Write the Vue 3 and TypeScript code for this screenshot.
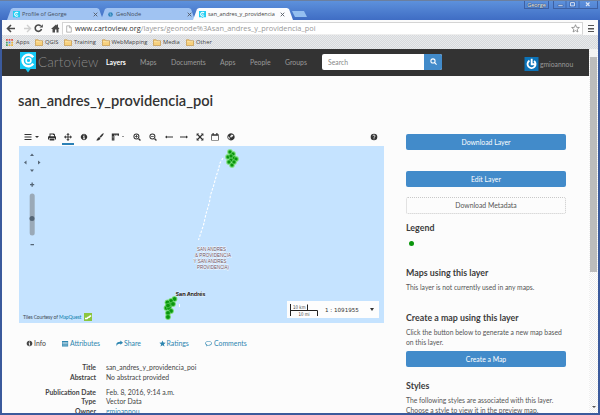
<script setup lang="ts">
interface Tab { title: string; cls: string }
interface Tool { name: string; d: string; stroke?: boolean; w: number }

const tabs: Tab[] = [
  { title: 'Profile of George', cls: 't1' },
  { title: 'GeoNode', cls: 't2' },
  { title: 'san_andres_y_providencia', cls: 't3 active' },
]
const bookmarks = [
  { name: 'QGIS', w: 29 },
  { name: 'Training', w: 37.5 },
  { name: 'WebMapping', w: 51.5 },
  { name: 'Media', w: 33 },
  { name: 'Other', w: 40 },
]
const nav = [
  { name: 'Layers', w: 34 },
  { name: 'Maps', w: 31 },
  { name: 'Documents', w: 49 },
  { name: 'Apps', w: 30 },
  { name: 'People', w: 35 },
  { name: 'Groups', w: 37 },
]
const tools: Tool[] = [
  { name: 'menu', w: 24, stroke: true, d: 'M.5 1.5h7M.5 4h7M.5 6.5h7' },
  { name: 'print', w: 16, d: 'M1.5 0.5h4.5l1 1V3H1.5zM2.5 1.4V3.2h3.5V2H5V1.4zM0 3.8L1 3h6l1 .8V6.5H6.8V5H1.2v1.5H0zM1.7 5.6h4.6V7.6H1.7z' },
  { name: 'pan', w: 15.5, d: 'M4 0L5.7 1.8H4.5v1.7h1.7V2.3L8 4 6.2 5.7V4.5H4.5v1.7h1.2L4 8 2.3 6.2h1.2V4.5H1.8v1.2L0 4l1.8-1.7v1.2h1.7V1.8H2.3z' },
  { name: 'info', w: 16, d: 'M4 .8a3.2 3.2 0 1 0 .01 0zM3.5 1.6h1v.9h-1zM3 3.2h1.5v2.4H5v.7H3v-.7h.5V3.9H3z' },
  { name: 'brush', w: 15.5, d: 'M7.6.3C8.2.8 6.5 3.2 4.8 4.8L3.5 3.7C5 1.8 7 0 7.6.3zM3.2 4.1l1.2 1.1C4 7 2.5 7.8.2 7.2 1.5 6.6 1 5 3.2 4.1z' },
  { name: 'measure', w: 22, d: 'M.8.5H8v2.3H7V1.800h-.5v1h-.7v-1h-.7v1h-.7v-1h-1V7.500H.8zM1.600 3v.5h1V3zM1.600 4.300v.5h1v-.5zM1.600 5.700v.5h1v-.5z' },
  { name: 'zoom-in', w: 15.5, d: 'M3.4.4a3 3 0 1 1 0 6 3 3 0 0 1 0-6zM3.4 1.4a2 2 0 1 0 0 4 2 2 0 0 0 0-4zM3 2h.8v1h1v.8h-1v1H3v-1H2V3h1zM5.9 5l2 2-.9.9-2-2z' },
  { name: 'zoom-out', w: 16, d: 'M3.4.4a3 3 0 1 1 0 6 3 3 0 0 1 0-6zM3.4 1.4a2 2 0 1 0 0 4 2 2 0 0 0 0-4zM2 3h2.8v.8H2zM5.9 5l2 2-.9.9-2-2z' },
  { name: 'previous', w: 15.5, d: 'M0 4l2-1.6v1.2h6v.8H2v1.2z' },
  { name: 'next', w: 15.5, d: 'M8 4L6 2.4v1.2H0v.8h6v1.2z' },
  { name: 'extent', w: 15.5, d: 'M.6.6h2.5l-.8.8L4 3.1l1.7-1.7-.8-.8h2.5v2.5l-.8-.8L4.9 4l1.7 1.7.8-.8v2.5H4.9l.8-.8L4 4.9 2.3 6.6l.8.8H.6V4.9l.8.8L3.1 4 1.4 2.3l-.8.8z' },
  { name: 'calendar', w: 15.5, d: 'M.3 1.2H1.5V0h1.2v1.2h2.6V0h1.2v1.2h1.2v6.4H.3zM1 2.7v4.2h6V2.7z' },
  { name: 'globe', w: 12, d: 'M4 .3a3.600 3.600 0 1 0 .01 0zM4.600 1.200l1.800 1.200-.7 1.100-1.100.2-.3 1L3.200 4l.2-1.200L4.600 2zM1.200 3.200l1.400 1.200-.1 1.200 1 1C1.800 6.500.9 5 1.200 3.200z' },
]
const northPoints = [[230, 152], [233, 154], [228, 157], [234, 158], [231, 160], [236, 159], [229, 162], [232, 165], [234, 162], [231, 156]]
const southPoints = [[174.5, 299], [171, 301], [167.5, 302.5], [170, 305], [173, 304], [166.5, 308], [169, 308], [171, 311], [168, 313], [168, 317], [168, 305.5]]
const route = 'M223 158L220 163 218.5 169 216 177 213.5 186 210.5 195 209.5 202 206 214 203.5 225 200.5 234 198.5 240'
const infoTabs = [
  { name: 'Info', w: 36, d: 'M4 .8a3.2 3.2 0 1 0 .01 0zM3.5 1.6h1v.9h-1zM3 3.2h1.5v2.4H5v.7H3v-.7h.5V3.9H3z' },
  { name: 'Attributes', w: 54, d: 'M0 1h7v6.5H0zM.5 2.5v.5h6v-.5zM.5 4v.5h6V4zM.5 5.5v.5h6v-.5z' },
  { name: 'Share', w: 42.5, d: 'M5 .7L8 3.2 5 5.5V4.2C2.5 4 1.3 4.6 1 7-.5 4 1 2 5 2z' },
  { name: 'Ratings', w: 46.5, d: 'M4 .5l1 2.4 2.6.2-2 1.7.7 2.6L4 6 1.7 7.4l.7-2.6-2-1.7L3 2.9z' },
  { name: 'Comments', w: 50, d: 'M4 1C1.8 1 .3 2.2.3 3.7c0 1 .6 1.7 1.4 2.2L1.3 7.3 3.2 6.3C6 6.6 7.8 5.3 7.8 3.7 7.8 2.2 6.2 1 4 1zM4 1.7c2 0 3.1 1 3.1 2S5.8 5.8 3.2 5.6l-.8.4.2-.5C1.5 5 1 4.4 1 3.7c0-1 1.2-2 3-2z' },
]
const details = [
  { k: 'Title', v: 'san_andres_y_providencia_poi' },
  { k: 'Abstract', v: 'No abstract provided' },
  { k: 'Publication Date', v: 'Feb. 8, 2016, 9:14 a.m.', gap: true },
  { k: 'Type', v: 'Vector Data' },
  { k: 'Owner', v: 'gmioannou', link: true },
]
</script>

<template>
  <div class="window">
    <header class="titlebar">
      <div class="tabs">
        <div v-for="t in tabs" :key="t.title" class="tab" :class="t.cls">
          <svg v-if="t.title !== 'GeoNode'" class="fav" viewBox="0 0 8 8"><path fill="#22cdf2" d="M0 0h8v7H5L4 8 3 7H0z" /><path fill="none" stroke="#fff" stroke-width="1.2" d="M5.8 2.3a2.2 2.2 0 1 0 0 2.8M3.5 3.7h1.5" /></svg>
          <svg v-else class="fav" viewBox="0 0 8 8"><circle cx="4" cy="4" r="2.6" fill="#2a7fb8" /><path stroke="#73b7dd" stroke-width=".7" d="M2 3l4 2M4 1.5v5" /></svg>
          <span class="tab-title">{{ t.title }}</span>
          <svg class="close" viewBox="0 0 5 5"><path stroke="#555b66" stroke-width=".9" d="M.7.7l3.6 3.6M4.3.7L.7 4.3" /></svg>
        </div>
        <i class="newtab"></i>
      </div>
      <div class="controls">
        <span class="user">George</span>
        <span class="ctl"><svg viewBox="0 0 38 7"><path fill="#e6eefb" stroke="#284a88" stroke-width=".5" d="M1 3.8h5v1.5H1z" /><path fill="none" stroke="#dbe6f8" d="M13.5 1.5h4v3.5h-4z" /><path fill="none" stroke="#274783" stroke-width=".4" d="M12.7.8h5.6v5h-5.6z" /><path stroke="#3e60a2" stroke-width=".8" d="M9 0v7M22 0v7" /><path stroke="#dbe6f8" stroke-width="1.2" d="M29 1.5l3.5 3.5M32.5 1.5L29 5" /></svg></span>
      </div>
    </header>

    <div class="body">
      <div class="addressbar">
        <svg class="navicons" viewBox="0 0 58 15">
          <g fill="none" stroke="#4a4a4a" stroke-width="1.6">
            <path d="M13 8.5H6M9 5L5.5 8.5 9 12" />
            <path d="M38.7 5.9A3.2 3.2 0 1 0 39.5 9" />
          </g>
          <path fill="#4a4a4a" d="M37.500 7.500h3.300V4.300zM49 9l5-4.600 1 1V4.500h1V7l1.500 2H56.500v3.500H54.500V9.500h-1.500v3H50.500V9z" />
          <path fill="none" stroke="#cfcfcf" stroke-width="1.4" d="M22 8.500h6M25 5L28.500 8.500 25 12" />
        </svg>
        <div class="omnibox">
          <svg class="page" viewBox="0 0 7 9"><path fill="#fff" stroke="#999" stroke-width=".8" d="M.8.8h3.4l2 2v5.4H.8zM4 .8V3h2.2" /></svg>
          <span class="url"><b>www.cartoview.org</b>/layers/geonode%3Asan_andres_y_providencia_poi</span>
          <svg class="star" viewBox="0 0 10 10"><path fill="#fff" stroke="#777" stroke-width=".8" d="M5 .8l1.2 2.9 3.1.2-2.4 2 .8 3L5 7.3 2.3 8.9l.8-3-2.4-2 3.1-.2z" /></svg>
        </div>
        <i class="burger"></i>
      </div>
      <div class="bookmarks">
        <svg class="apps" viewBox="0 0 8 8"><path fill="#dd5246" d="M0 0h2v2H0zM3 0h2v2H3zM6 0h2v2H6z" /><path fill="#45a168" d="M0 3h2v2H0z" /><path fill="#4c86e8" d="M3 3h2v2H3z" /><path fill="#e8b23e" d="M6 3h2v2H6zM3 6h2v2H3zM6 6h2v2H6z" /><path fill="#45a168" d="M0 6h2v2H0z" /></svg>
        <span class="apps-label">Apps</span>
        <span v-for="b in bookmarks" :key="b.name" class="bm" :style="{ width: b.w + 'px' }">
          <svg viewBox="0 0 8 7"><path fill="#f7d07b" stroke="#b98632" stroke-width=".6" d="M.4 6.6V.8h2.8l.8 1h3.6v4.8z" /><path stroke="#fff0c2" stroke-width=".6" d="M1 2.7h6" /></svg>{{ b.name }}
        </span>
      </div>

      <div class="viewport">
        <div class="page-area">
          <nav class="navbar">
            <svg class="logo" viewBox="0 0 16 21"><path fill="#14c8f4" d="M0 0h16v17h-5.5L8 20.5 5.5 17H0z" /><path fill="none" stroke="#fff" stroke-width="2.5" d="M13.2 5.3A5.8 5.8 0 1 0 13.2 11.6" /><circle cx="8.5" cy="8.4" r="2.4" fill="none" stroke="#fff" stroke-width="1.6" /></svg>
            <span class="brand">Cartoview</span>
            <a v-for="n in nav" :key="n.name" :class="{ on: n.name === 'Layers' }" :style="{ width: n.w + 'px' }">{{ n.name }}</a>
            <div class="search"><span>Search</span><b><svg viewBox="0 0 8 8"><path fill="none" stroke="#fff" stroke-width="1.2" d="M5.3 5.3L7.5 7.5" /><circle cx="3.4" cy="3.4" r="2.4" fill="none" stroke="#fff" stroke-width="1.2" /></svg></b></div>
            <div class="account">
              <svg viewBox="0 0 15 15"><path fill="#0c73b8" d="M0 0h15v15H0z" /><path fill="none" stroke="#fff" stroke-width="2" d="M5.3 3.9A4.3 4.3 0 1 0 10.2 4.2M7.7 2v5.8h3.8" /></svg>
              <span>gmioannou</span>
            </div>
          </nav>

          <h1>san_andres_y_providencia_poi</h1>

          <div class="columns">
            <main>
              <div class="toolbar">
                <span v-for="t in tools" :key="t.name" class="tool" :class="t.name" :style="{ width: t.w + 'px' }">
                  <svg viewBox="0 0 8 8"><path :d="t.d" :fill="t.stroke ? 'none' : '#333'" :stroke="t.stroke ? '#333' : 'none'" fill-rule="evenodd" /></svg>
                  <i v-if="t.name === 'menu' || t.name === 'measure'" class="caret"></i>
                </span>
                <svg class="help" viewBox="0 0 8 8"><circle cx="4" cy="4" r="3.3" fill="#333" /><path fill="none" stroke="#fff" stroke-width=".9" d="M2.8 3.1C3 1.7 5.3 1.9 5 3.2 4.8 3.8 4 3.9 4 4.8M4 5.4v.9" /></svg>
              </div>
              <div class="map">
                <svg class="canvas" viewBox="19 146 365 177">
                  <path :d="route" fill="none" stroke="#fff" stroke-width="1.1" stroke-dasharray="2.5 1.5" />
                  <g fill="#8be08d"><circle v-for="(p, i) in northPoints" :key="i" :cx="p[0]" :cy="p[1]" r="2.9" /><circle v-for="(p, i) in southPoints" :key="'s' + i" :cx="p[0]" :cy="p[1]" r="2.9" /></g>
                  <g fill="#0a960c" stroke="#7adf7c" stroke-width=".5"><circle v-for="(p, i) in northPoints" :key="i" :cx="p[0]" :cy="p[1]" r="2" /><circle v-for="(p, i) in southPoints" :key="'s' + i" :cx="p[0]" :cy="p[1]" r="2.3" /></g>
                  <g class="region">
                    <text x="197" y="251" textLength="29" lengthAdjust="spacingAndGlyphs">SAN ANDRES</text>
                    <text x="195" y="256.8" textLength="36" lengthAdjust="spacingAndGlyphs">&amp; PROVIDENCIA</text>
                    <text x="193.5" y="262.6" textLength="33" lengthAdjust="spacingAndGlyphs">Y SAN ANDRES</text>
                    <text x="197" y="268.5" textLength="32" lengthAdjust="spacingAndGlyphs">PROVIDENCIA)</text>
                  </g>
                  <text class="place" x="175.5" y="296" textLength="30">San Andrés</text>
                  <path fill="#fff" d="M179 304h1v3h-1z" />
                  <g fill="#556575">
                    <path d="M32 153.5l2 2.5h-4zM32 172l2-2.5h-4zM24 162.5l2.5-2v4zM40.500 162.500L38 160.500v4z" />
                    <path d="M31.5 182.5h1.3v1.500h1.400v1.200h-1.400v1.500h-1.300v-1.500H30v-1.200h1.500zM30.500 244h3.500v1.200h-3.500z" />
                    <rect x="29.7" y="193.5" width="5" height="42" rx="2.5" fill="#9aa9b7" />
                    <circle cx="32" cy="218.5" r="2.5" />
                  </g>
                </svg>
                <div class="credit"><span>Tiles Courtesy of <a>MapQuest</a></span><svg viewBox="0 0 8 8"><path fill="#8cc63e" d="M0 0h8v8H0z" /><path fill="none" stroke="#fff" stroke-width="1.5" d="M1 5.5h2l1.2-1.2H5L6.2 3h1" /></svg></div>
                <div class="scale">
                  <svg viewBox="0 0 30 16"><path fill="none" stroke="#222" d="M1.5 2v12M1.5 8.5h27V14M18.5 2.5v6" /><text x="4" y="6.7" textLength="12.5" lengthAdjust="spacingAndGlyphs">10 km</text><text x="9.5" y="13.5" textLength="11" lengthAdjust="spacingAndGlyphs">10 mi</text></svg>
                  <span>1 : 1091955</span><i class="caret"></i>
                </div>
              </div>
              <div class="infotabs">
                <a v-for="t in infoTabs" :key="t.name" :class="{ current: t.name === 'Info' }" :style="{ width: t.w + 'px' }"><svg viewBox="0 0 8 8"><path :d="t.d" fill="currentColor" fill-rule="evenodd" /></svg>{{ t.name }}</a>
              </div>
              <dl>
                <div v-for="d in details" :key="d.k" :class="{ gap: d.gap }"><dt>{{ d.k }}</dt><dd :class="{ link: d.link }">{{ d.v }}</dd></div>
              </dl>
            </main>

            <aside>
              <button class="btn first">Download Layer</button>
              <button class="btn">Edit Layer</button>
              <button class="btn plain">Download Metadata</button>
              <h4>Legend</h4>
              <i class="legend-dot"></i>
              <h4 class="h-maps">Maps using this layer</h4>
              <p>This layer is not currently used in any maps.</p>
              <h4 class="h-create">Create a map using this layer</h4>
              <p>Click the button below to generate a new map based<br>on this layer.</p>
              <button class="btn create">Create a Map</button>
              <h4 class="h-styles">Styles</h4>
              <p>The following styles are associated with this layer.<br>Choose a style to view it in the preview map.</p>
            </aside>
          </div>
        </div>
        <div class="scrollbar"><i class="up"></i><i class="thumb"></i><i class="down"></i></div>
      </div>
    </div>
  </div>
</template>

<style>
body { background: #3f62a8; overflow: hidden; }
</style>

<style scoped>
* { box-sizing: border-box; }
.window { width: 600px; height: 415px; overflow: hidden; padding: 0 2px 2px; display: flex; flex-direction: column; background: #3b5a9c; border-top: 1px solid #6b7f9f; font-family: "Open Sans", sans-serif; font-size: 7px; color: #333; }
svg { display: block; flex: none; }
.titlebar { height: 19px; flex: none; margin: 0 -2px; padding-left: 7px; display: flex; justify-content: space-between; background: linear-gradient(#5d91dc, #3f6dc4); }
.tabs { display: flex; align-items: flex-end; }
.tab { height: 12px; display: flex; align-items: center; padding-left: 6px; background: #a0c3f2; clip-path: polygon(0 100%, 4px 1px, 6px 0, calc(100% - 6px) 0, calc(100% - 4px) 1px, 100% 100%); color: #454f60; }
.t1 { width: 96px; }
.t2 { width: 94px; margin-left: -2px; }
.t3 { width: 100px; margin-left: -2px; background: #fbfcfe; color: #444; }
.fav { width: 7px; height: 7px; }
.tab-title { margin-left: 2px; font-size: 5.7px; line-height: 12px; width: 67px; white-space: nowrap; }
.t3 .tab-title { width: 68px; font-size: 5.5px; }
.close { width: 5px; height: 5px; margin-left: 4px; }
.newtab { width: 15px; height: 6px; margin: 0 0 3px -1px; background: #94bff0; clip-path: polygon(0 0, 80% 0, 100% 100%, 20% 100%); }
.controls { display: flex; padding-right: 2px; height: 8px; gap: 4px; }
.user { width: 25px; border: 1px solid #3e60a2; border-top: 0; font-size: 5.5px; line-height: 8px; text-align: center; color: #fff; text-shadow: 0 0 1px #123, 0 0 1px #123; }
.ctl { width: 45px; border: 1px solid #3e60a2; border-top: 0; display: flex; justify-content: center; }
.ctl svg { width: 38px; height: 7px; }
.body { flex: 1; min-height: 0; display: flex; flex-direction: column; background: #fcfcfc; }
.addressbar { height: 15px; flex: none; display: flex; background: #fbfbfb; }
.navicons { width: 58px; height: 15px; margin: 0 2px 0 0; }
.omnibox { width: 521px; height: 13px; margin-top: 2px; border: 1px solid #d4d4d4; border-bottom-color: #eee; background: #fff; display: flex; align-items: center; }
.page { width: 6px; height: 8px; margin-left: 3px; }
.url { margin-left: 3px; width: 502px; font-size: 7.4px; line-height: 11px; color: #999; white-space: nowrap; }
.url b { font-weight: 400; color: #333; }
.star { width: 9px; height: 9px; margin-left: -6px; }
.burger { width: 6px; height: 7px; margin: 5px 0 0 5px; border: solid #555; border-width: 1.5px 0; background: linear-gradient(#555, #555) center / 100% 1.5px no-repeat; }
.bookmarks { height: 14px; flex: none; padding: 0 0 0 4px; display: flex; align-items: center; line-height: 12px; font-size: 5.8px; color: #444; background: repeating-conic-gradient(#e8eaec 0 25%, #d7d9dc 0 50%) 0 0 / 2px 2px; }
.apps { width: 7px; height: 7px; }
.apps-label { margin-left: 3px; width: 19px; }
.bm { display: flex; align-items: center; gap: 2px; white-space: nowrap; }
.bm svg { width: 8px; height: 7px; }
.viewport { flex: 1; min-height: 0; display: flex; font-family: Lato, sans-serif; }
.page-area { width: 587px; overflow: hidden; background: #fcfcfc; }
.navbar { height: 27px; background: #333; display: flex; align-items: center; color: #999; }
.logo { width: 16px; height: 21px; margin-left: 18px; }
.brand { width: 70px; padding-left: 2px; font-size: 13.5px; line-height: 20px; margin-top: -2px; color: #8a8a8a; font-weight: 300; letter-spacing: .1px; }
.navbar a { font-size: 6.9px; line-height: 12px; margin-top: -2px; }
.navbar .on { color: #fff; font-weight: 700; }
.search { width: 120px; height: 16px; margin-top: -2px; display: flex; background: #fff; border-radius: 2px; overflow: hidden; font-size: 6.8px; }
.search span { flex: 1; padding-left: 6px; line-height: 16px; color: #888; }
.search b { width: 18px; background: #428bca; display: flex; align-items: center; justify-content: center; }
.search svg { width: 7px; height: 7px; }
.account { margin-left: 82px; margin-top: 3px; display: flex; align-items: center; gap: 1px; font-size: 6.8px; color: #999; }
.account svg { width: 15px; height: 14px; }
h1 { margin: 0; padding: 15px 0 0 16px; height: 52px; font-size: 14.65px; line-height: 20px; font-weight: 600; color: #333; }
.columns { display: flex; gap: 22px; padding-left: 17px; }
main { width: 365px; }
.toolbar { height: 18px; padding: 5px 6px 0 5px; display: flex; }
.tool { height: 13px; display: flex; gap: 3px; }
.tool svg, .help { width: 8px; height: 8px; }
.pan { position: relative; }
.pan::after { content: ""; position: absolute; left: -2px; top: 10px; width: 12px; height: 1.5px; background: #2b80b5; }
.help { margin-left: auto; }
.caret { width: 0; height: 0; margin-top: 3px; border: 2px solid transparent; border-top-color: #333; border-bottom: 0; }
.measure .caret { border-width: 1.3px; border-bottom: 0; }
.map { width: 365px; height: 177px; background: #c5e3ff; position: relative; }
.canvas { width: 365px; height: 177px; }
.region { font: 5.4px "Liberation Sans", sans-serif; fill: #5f4a5c; stroke: #fff; stroke-width: .8px; paint-order: stroke; }
.place { font: 700 5.5px "DejaVu Sans", sans-serif; fill: #333; stroke: #e9f4ff; stroke-width: .7px; paint-order: stroke; }
.credit { position: absolute; left: 4px; bottom: 2px; display: flex; align-items: center; font-size: 5px; line-height: 8px; color: #3f4b55; white-space: pre; }
.credit span { width: 60px; letter-spacing: -.12px; }
.credit a { color: #0f80ae; }
.credit svg { width: 8px; height: 8px; margin-left: 1px; }
.scale { position: absolute; right: 5px; bottom: 5px; width: 92px; height: 17px; background: #fdfdfd; display: flex; align-items: center; padding-left: 2px; font: 5.6px "DejaVu Sans", sans-serif; color: #333; }
.scale svg { width: 30px; height: 16px; }
.scale text { font: 5px "DejaVu Sans", sans-serif; fill: #444; }
.scale span { width: 45px; margin-left: 6px; white-space: nowrap; }
.scale .caret { margin: 0; border-width: 3px 2.5px 0; }
.infotabs { height: 40px; padding: 15px 0 0 7px; display: flex; font-size: 6.9px; line-height: 10px; color: #2e86b0; }
.infotabs a { display: flex; gap: 1px; height: 10px; white-space: nowrap; }
.infotabs a:last-child { gap: 2px; }
.infotabs svg { width: 7px; height: 7px; margin-top: 1.5px; }
.infotabs .current { color: #444; }
dl { margin: 0; font-size: 6.85px; line-height: 9.75px; color: #444; }
dl div { display: flex; gap: 10px; height: 9.75px; }
dl .gap { margin-top: 5px; }
dt { width: 77px; text-align: right; font-weight: 700; }
dd { margin: 0; white-space: nowrap; }
.link { color: #2e86b0; }
aside { width: 160px; padding-top: 6px; }
.btn { display: block; width: 160px; height: 16px; margin: 0; padding: 0; border: 0; border-radius: 2px; background: #428bca; color: #fff; font: 6.85px/16px Lato, sans-serif; }
.first { margin-bottom: 21px; }
.plain { margin-top: 10px; height: 17px; background: transparent; border: 1px dotted #c8c8c8; color: #555; line-height: 15px; }
h4 { margin: 8px 0 0; font-size: 8.85px; line-height: 12px; font-weight: 700; color: #3c3c3c; white-space: nowrap; }
.legend-dot { display: block; width: 5px; height: 5px; margin: 7px 0 0 3px; border-radius: 50%; background: #0a960c; }
.h-maps { margin-top: 21px; }
p { margin: 4px 0 0; font-size: 6.78px; line-height: 9.75px; color: #555; white-space: nowrap; }
.h-create { margin-top: 19px; }
.create { margin-top: 4px; }
.h-styles { margin-top: 13px; }
.scrollbar { width: 9px; padding-left: 1px; display: flex; flex-direction: column; align-items: flex-start; background: repeating-conic-gradient(#fff 0 25%, #eee 0 50%) 0 0 / 2px 2px; }
.up { width: 7px; height: 8px; background: #f2f2f2; }
.thumb { width: 7px; height: 215px; background: #bcbcbc; }
.down { margin: 134px 0 0 2px; border: 2px solid transparent; border-top-color: #555; border-bottom: 0; }
</style>
